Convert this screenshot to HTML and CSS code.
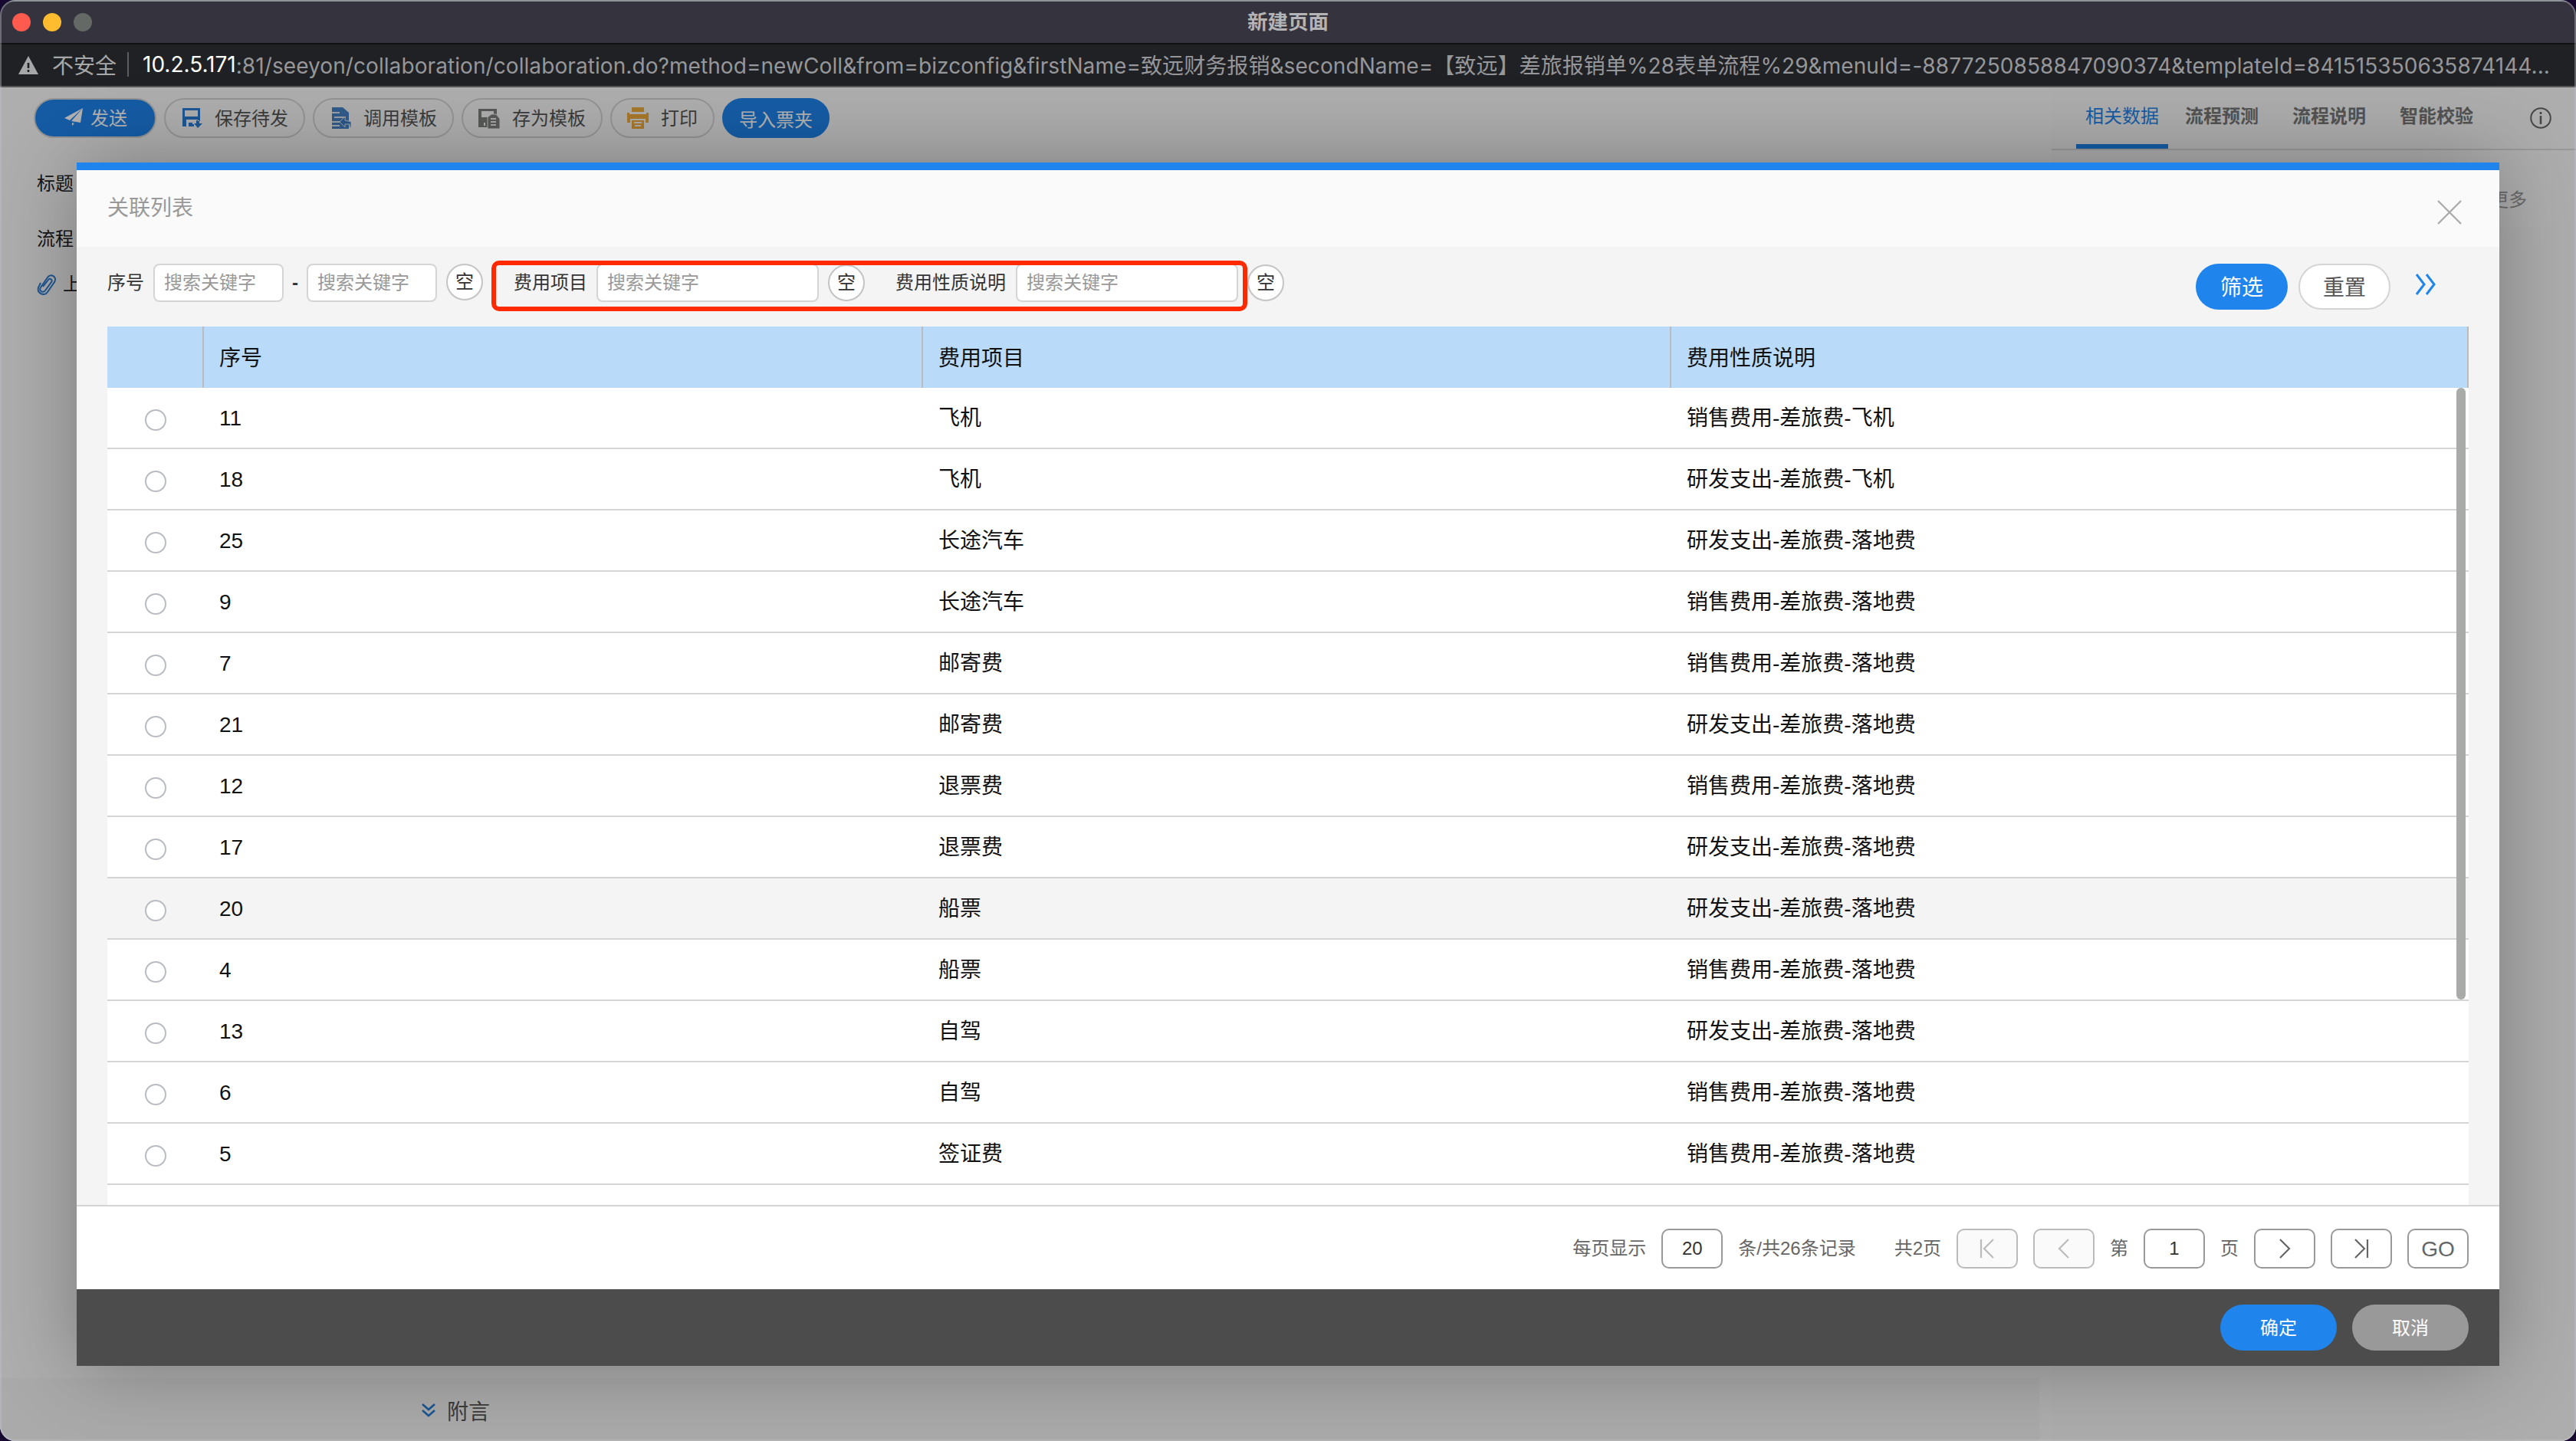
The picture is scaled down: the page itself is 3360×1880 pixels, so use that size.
FILE: index.html
```html
<!DOCTYPE html>
<html lang="zh-CN">
  <head>
    <meta charset="UTF-8" />
    <meta name="viewport" content="width=device-width, initial-scale=1.0" />
    <title>新建页面</title>
    <link rel="stylesheet" href="styles.css">
  </head>
  <body>
    <div class="window">
      <div class="titlebar">
        <div class="lights">
          <span class="light red"></span>
          <span class="light yellow"></span>
          <span class="light gray"></span>
        </div>
        <span class="window-title">新建页面</span>
      </div>
      <div class="address">
        <svg class="warn" width="26" height="24" viewBox="0 0 26 24"><path d="M13 0L26 24H0Z" fill="#a6a7a9"/><path d="M13 9v7M13 18v3" stroke="#202124" stroke-width="2.6"/></svg>
        <span class="unsafe">不安全</span>
        <span class="sep"></span>
        <span class="host">10.2.5.171</span><span class="path">:81/seeyon/collaboration/collaboration.do?method=newColl&amp;from=bizconfig&amp;firstName=致远财务报销&amp;secondName=【致远】差旅报销单%28表单流程%29&amp;menuId=-8877250858847090374&amp;templateId=841515350635874144...</span>
      </div>

      <div class="page">
        <div class="main">
          <div class="toolbar">
            <button class="tool send">
              <svg width="26" height="26" viewBox="0 0 26 26" fill="#fff"><path d="M25 1L1 14l7 3zM25 1L10 18l12 2zM11 20v4l3-3z"/></svg>
              发送
            </button>
            <button class="tool">
              <svg width="28" height="28" viewBox="0 0 28 28"><path fill-rule="evenodd" d="M2 1H25V18H22V16H7V25H2ZM5 4V12H22V4ZM10 20H15V22H17V25H10ZM20 17H24V21H28L22 27L17 21H20Z" fill="#2c7cd3"/></svg>
              保存待发
            </button>
            <button class="tool">
              <svg width="28" height="28" viewBox="0 0 28 28"><path d="M3 0H17L25 7V28H3Z" fill="#4583c6"/><path d="M3 7H13M6 13H21M3 19H13M3 24H13" stroke="#dfe6ec" stroke-width="2"/><path d="M20 12L13 19L20 26V22H26V26H28V19L20 17Z" fill="#3a7cc6" stroke="#dfe6ec"/></svg>
              调用模板
            </button>
            <button class="tool">
              <svg width="28" height="28" viewBox="0 0 28 28"><path fill-rule="evenodd" d="M0 2H24V9H20V5H4V13H12V26H0ZM7 20V24H9V20Z" fill="#7e827e"/><path d="M12 13L17 9H23L28 15V28H12Z" fill="#7e827e" stroke="#eee"/><path d="M16 15H23M16 19H23M16 23H23" stroke="#f0f0f0" stroke-width="2"/></svg>
              存为模板
            </button>
            <button class="tool">
              <svg width="28" height="28" viewBox="0 0 28 28" fill="#f0ac3d"><path d="M6 0H22V6H6ZM0 7H3V9H25V7H28V20H24V15H4V20H0ZM6 17H22V28H6Z"/><path d="M9 19H19V21H9ZM10 23H18V25H10Z" fill="#fafafa"/></svg>
              打印
            </button>
            <button class="tool import">导入票夹</button>
          </div>
          <div class="form">
            <div class="form-row">标题</div>
            <div class="form-row">流程</div>
            <div class="form-row attach">
              <svg width="26" height="28" viewBox="0 0 26 28" fill="none" stroke="#2a7bd2" stroke-width="2"><path d="M8 17L15 8C17 5 21 8 19 11L11 22C8 26 2 22 5 18L14 5C18-1 27 4 23 11L14 24C10 30 0 26 2 18L5 12"/></svg>
              上
            </div>
          </div>
          <div class="content"></div>
          <div class="postscript">
            <svg width="20" height="20" viewBox="0 0 20 20" fill="none" stroke="#247bd6" stroke-width="2.6"><path d="M2 2L10 9L18 2M2 10L10 17L18 10"/></svg>
            附言
          </div>
        </div>
        <div class="side">
          <div class="tabs">
            <span class="tab active">相关数据</span>
            <span class="tab">流程预测</span>
            <span class="tab">流程说明</span>
            <span class="tab">智能校验</span>
            <svg class="info" width="28" height="28" viewBox="0 0 28 28" fill="none" stroke="#666" stroke-width="2"><circle cx="14" cy="14" r="12.8"/><path d="M14 11V22" stroke-width="2.6"/><path d="M14 6V9" stroke-width="2.6"/></svg>
          </div>
          <div class="more">更多</div>
        </div>
      </div>
    </div>

    <div class="mask"></div>

    <div class="dialog">
      <div class="dialog-header">
        <span>关联列表</span>
        <svg width="32" height="32" viewBox="0 0 32 32" stroke="#a8a8a8" stroke-width="2.2"><path d="M1 1L31 31M31 1L1 31"/></svg>
      </div>
      <div class="dialog-body">
        <div class="filters">
          <span class="label">序号</span>
          <div class="input short">搜索关键字</div>
          <span class="dash">-</span>
          <div class="input short">搜索关键字</div>
          <span class="empty">空</span>
          <span class="label item-label">费用项目</span>
          <div class="input">搜索关键字</div>
          <span class="empty low">空</span>
          <span class="label desc-label">费用性质说明</span>
          <div class="input">搜索关键字</div>
          <span class="empty low">空</span>
          <div class="filter-actions">
            <button class="btn primary">筛选</button>
            <button class="btn">重置</button>
            <svg width="28" height="28" viewBox="0 0 28 28" fill="none" stroke="#1f85ec" stroke-width="3"><path d="M2 1L12 14L2 27M15 1L25 14L15 27"/></svg>
          </div>
          <div class="highlight"></div>
        </div>
        <div class="table">
          <div class="thead">
            <span class="cell"></span>
            <span class="cell">序号</span>
            <span class="cell">费用项目</span>
            <span class="cell">费用性质说明</span>
          </div>
          <div class="tbody" id="rows"></div>
          <div class="scrollbar"></div>
        </div>
      </div>
      <div class="pager">
        <span>每页显示</span>
        <span class="box num">20</span>
        <span>条/共26条记录</span>
        <span class="pages">共2页</span>
        <span class="box disabled"><svg width="24" height="26" viewBox="0 0 24 26"><path d="M4 1V25M20 1L8 13L20 25"/></svg></span>
        <span class="box disabled"><svg width="24" height="26" viewBox="0 0 24 26"><path d="M18 1L6 13L18 25"/></svg></span>
        <span>第</span>
        <span class="box num">1</span>
        <span>页</span>
        <span class="box"><svg width="24" height="26" viewBox="0 0 24 26"><path d="M6 1L18 13L6 25"/></svg></span>
        <span class="box"><svg width="24" height="26" viewBox="0 0 24 26"><path d="M4 1L16 13L4 25M20 1V25"/></svg></span>
        <span class="box go">GO</span>
      </div>
      <div class="dialog-footer">
        <button class="btn wide primary">确定</button>
        <button class="btn wide cancel">取消</button>
      </div>
    </div>

    <div class="window-edge"></div>

    <script>
      const rows = [
        ["11", "飞机", "销售费用-差旅费-飞机"],
        ["18", "飞机", "研发支出-差旅费-飞机"],
        ["25", "长途汽车", "研发支出-差旅费-落地费"],
        ["9", "长途汽车", "销售费用-差旅费-落地费"],
        ["7", "邮寄费", "销售费用-差旅费-落地费"],
        ["21", "邮寄费", "研发支出-差旅费-落地费"],
        ["12", "退票费", "销售费用-差旅费-落地费"],
        ["17", "退票费", "研发支出-差旅费-落地费"],
        ["20", "船票", "研发支出-差旅费-落地费"],
        ["4", "船票", "销售费用-差旅费-落地费"],
        ["13", "自驾", "研发支出-差旅费-落地费"],
        ["6", "自驾", "销售费用-差旅费-落地费"],
        ["5", "签证费", "销售费用-差旅费-落地费"],
      ];

      // Fill the table body
      const tbody = document.getElementById("rows");
      rows.forEach(([no, item, desc]) => {
        const row = document.createElement("div");
        row.className = no === "20" ? "row hover" : "row";
        row.innerHTML = `<span class="cell"><i class="radio"></i></span>
          <span class="cell">${no}</span>
          <span class="cell">${item}</span>
          <span class="cell">${desc}</span>`;
        tbody.appendChild(row);
      });
    </script>
  </body>
</html>
```
FILE: styles.css
```css
* {
  box-sizing: border-box;
}
body {
  margin: 0;
  width: 3360px;
  height: 1880px;
  overflow: hidden;
  position: relative;
  background: #16082e;
  font-family: "Liberation Sans", "Noto Sans CJK SC", sans-serif;
  font-size: 24px;
  color: #333;
}
button {
  font-family: inherit;
  margin: 0;
  padding: 0;
}
svg {
  flex: none;
  display: block;
}

/* Browser window */
.window {
  height: 1880px;
  display: flex;
  flex-direction: column;
  border-radius: 20px;
  overflow: hidden;
}
.titlebar {
  height: 58px;
  display: grid;
  grid-template-columns: 1fr auto 1fr;
  align-items: center;
  background: #35333d;
  border-top: 2px solid #717579;
  border-bottom: 2px solid #111;
}
.lights {
  display: flex;
  gap: 16px;
  padding-left: 16px;
}
.light {
  width: 24px;
  height: 24px;
  border-radius: 50%;
}
.light.red {
  background: #fe5a4d;
}
.light.yellow {
  background: #febc2e;
}
.light.gray {
  background: #646965;
}
.window-title {
  padding-bottom: 6px;
  font-size: 26.5px;
  font-weight: bold;
  color: #b4b3b6;
}
.address {
  height: 56px;
  padding-bottom: 2px;
  display: flex;
  align-items: center;
  background: #202124;
  border-bottom: 2px solid #555;
  font-family: Inter, "Noto Sans CJK SC", sans-serif;
  font-size: 28px;
  color: #96979a;
  white-space: nowrap;
}
.warn {
  margin: 2px 18px 0 24px;
}
.unsafe {
  width: 98px;
  color: #a6a7a9;
}
.sep {
  width: 2px;
  height: 32px;
  margin-right: 18px;
  background: #5c5d60;
}
.host {
  color: #fff;
}
.path {
  letter-spacing: 0.08px;
}
.window-edge {
  position: absolute;
  inset: 0;
  border: 2px solid rgba(190, 195, 205, 0.4);
  border-radius: 20px;
}

/* Page behind the dialog */
.page {
  flex: 1;
  display: flex;
  background: #fafafa;
}
.main {
  width: 2660px;
  margin-right: 16px;
  display: flex;
  flex-direction: column;
}
.toolbar {
  display: flex;
  gap: 10px;
  padding: 14px 0 0 44px;
}
.tool {
  height: 52px;
  padding: 0 20px 3px;
  display: flex;
  align-items: center;
  gap: 16px;
  border: 2px solid #d4d4d4;
  border-radius: 26px;
  background: #fafafa;
  color: #555;
  font-size: 24px;
}
.tool svg {
  margin-top: 3px;
}
.tool.send {
  width: 160px;
  padding-left: 37px;
  gap: 9px;
  background: #1f85ec;
  color: #fff;
}
.tool.send svg {
  margin-top: 0;
}
.tool.import {
  border-color: #1f85ec;
  background: #1f85ec;
  color: #fff;
  padding: 0 20px;
}
.form {
  height: 226px;
  padding: 24px 0 0 48px;
  color: #222;
}
.form-row {
  height: 72px;
  line-height: 72px;
}
.form-row.attach {
  display: flex;
  align-items: center;
  gap: 8px;
  height: 46px;
}
.content {
  flex: 1;
}
.postscript {
  height: 82px;
  padding: 2px 0 0 549px;
  display: flex;
  align-items: center;
  gap: 14px;
  background: #f4f4f4;
  font-size: 28px;
  color: #555;
}
.side {
  flex: 1;
  background: #f8f8f8;
}
.tabs {
  height: 82px;
  display: flex;
  gap: 20px;
  padding-left: 32px;
  border-bottom: 2px solid #dadada;
}
.tab {
  width: 120px;
  text-align: center;
  line-height: 75px;
  font-weight: 600;
  color: #777;
}
.tab.active {
  border-bottom: 6px solid #1f85ec;
  color: #1f85ec;
  font-weight: normal;
  margin-right: -10px;
}
.info {
  margin: 26px 0 0 42px;
}
.more {
  height: 70px;
  margin: 30px 32px 0 20px;
  padding-right: 32px;
  background: #fafafa;
  color: #999;
  line-height: 69px;
  text-align: right;
}
.mask {
  position: absolute;
  top: 114px;
  left: 0;
  right: 0;
  bottom: 0;
  border-radius: 0 0 20px 20px;
  background: rgba(0, 0, 0, 0.3);
}

/* Dialog */
.dialog {
  position: absolute;
  top: 212px;
  left: 100px;
  width: 3160px;
  height: 1570px;
  display: flex;
  flex-direction: column;
  border-top: 10px solid #1f85ec;
  background: #f4f4f4;
  box-shadow: 0 0 100px rgba(0, 0, 0, 0.3);
}
.dialog-header {
  height: 100px;
  padding: 0 49px 0 40px;
  display: flex;
  justify-content: space-between;
  background: #fafafa;
  font-size: 28px;
  line-height: 100px;
  color: #999;
}
.dialog-header svg {
  margin-top: 39px;
}
.dialog-body {
  height: 1250px;
  padding: 0 40px;
}
.filters {
  position: relative;
  height: 104px;
  padding-top: 22px;
  display: flex;
  align-items: flex-start;
}
.label {
  width: 60px;
  line-height: 49px;
}
.item-label {
  width: 108px;
  margin-left: 40px;
}
.desc-label {
  width: 157px;
  margin-left: 40px;
}
.input {
  width: 290px;
  height: 50px;
  padding-left: 12px;
  border: 2px solid #d4d4d4;
  border-radius: 8px;
  background: #fff;
  color: #999;
  line-height: 45px;
}
.input.short {
  width: 170px;
}
.dash {
  width: 30px;
  text-align: center;
  line-height: 50px;
  font-weight: bold;
}
.empty {
  width: 48px;
  height: 48px;
  margin-left: 12px;
  border: 2px solid #c4c4c4;
  border-radius: 50%;
  background: #fff;
  text-align: center;
  line-height: 44px;
}
.empty.low {
  margin-top: 1px;
}
.filter-actions {
  margin-left: auto;
  padding-right: 42px;
  display: flex;
  gap: 14px;
}
.filter-actions svg {
  margin: 13px 0 0 18px;
}
.highlight {
  position: absolute;
  left: 501px;
  top: 18px;
  width: 986px;
  height: 66px;
  border: 6px solid #ff2a00;
  border-radius: 10px;
}
.btn {
  width: 120px;
  height: 60px;
  padding-bottom: 3px;
  border: 2px solid #d4d4d4;
  border-radius: 30px;
  background: #fff;
  color: #555;
  font-size: 28px;
}
.btn.primary {
  border: none;
  background: #1f85ec;
  color: #fff;
}
.btn.wide {
  width: 152px;
  font-size: 24px;
}
.btn.cancel {
  border: none;
  background: #999;
  color: #fff;
}

/* Table */
.table {
  position: relative;
  height: 1146px;
  overflow: hidden;
  background: #fff;
  color: #111;
  font-size: 28px;
}
.thead,
.row {
  height: 80px;
  display: grid;
  grid-template-columns: 126px 938px 976px 1fr;
}
.thead {
  background: #b9daf9;
}
.cell {
  height: 78px;
  padding-left: 20px;
  line-height: 80px;
}
.thead .cell {
  height: 80px;
  border-right: 2px solid #bbb;
  line-height: 83px;
}
.row {
  border-bottom: 2px solid #d4d4d4;
}
.row.hover {
  background: #f4f4f4;
}
.radio {
  display: block;
  width: 28px;
  height: 28px;
  margin: 28px 0 0 29px;
  border: 2px solid #b8bcc2;
  border-radius: 50%;
  background: #fff;
}
.scrollbar {
  position: absolute;
  top: 80px;
  right: 4px;
  width: 12px;
  height: 798px;
  border-radius: 6px;
  background: #a9aba9;
}

/* Pager and footer */
.pager {
  height: 110px;
  padding: 2px 40px 0;
  display: flex;
  align-items: center;
  justify-content: flex-end;
  gap: 20px;
  border-top: 2px solid #d4d4d4;
  background: #fff;
  color: #666;
  line-height: 26px;
}
.pages {
  margin-left: 30px;
}
.box {
  width: 80px;
  height: 52px;
  display: flex;
  align-items: center;
  justify-content: center;
  border: 2px solid #999;
  border-radius: 10px;
}
.box svg {
  fill: none;
  stroke: #666;
  stroke-width: 2.2;
}
.box.num {
  color: #333;
}
.box.disabled {
  border-color: #bbb;
  background: #fafafa;
}
.box.disabled svg {
  stroke: #bbb;
}
.box.go {
  padding-top: 2px;
  font-size: 28px;
}
.dialog-footer {
  height: 100px;
  padding: 20px 40px;
  display: flex;
  justify-content: flex-end;
  gap: 20px;
  background: #4c4c4c;
}
```
